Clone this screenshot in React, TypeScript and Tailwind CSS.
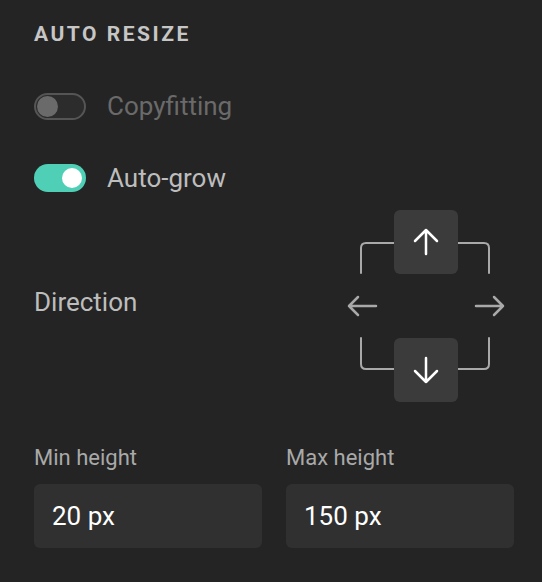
import { useState } from "react";

function Toggle({ on, disabled }: { on: boolean; disabled?: boolean }) {
  if (disabled) {
    return (
      <div className="flex h-[27px] w-[52px] items-center rounded-full border-2 border-[#555] bg-[#2c2c2c] px-[1px]">
        <div className="h-[21px] w-[21px] rounded-full bg-[#6a6a6a]" />
      </div>
    );
  }
  return (
    <div
      className={
        on
          ? "flex h-[28px] w-[52px] items-center justify-end rounded-full bg-[#4fd0b6] px-[4px]"
          : "flex h-[28px] w-[52px] items-center rounded-full bg-[#555] px-[4px]"
      }
    >
      <div className="h-[20px] w-[20px] rounded-full bg-white" />
    </div>
  );
}

function DirButton({ up }: { up: boolean }) {
  return (
    <div className="relative flex h-[64px] w-[64px] items-center justify-center rounded-[6px] bg-[#3b3b3b]">
      <svg width="28" height="28" viewBox="0 0 28 28" fill="none" stroke="#fff" strokeWidth="2.5" strokeLinecap="round" strokeLinejoin="round">
        {up ? <path d="M14 2V26M3 13L14 2L25 13" /> : <path d="M14 2V26M3 15L14 26L25 15" />}
      </svg>
    </div>
  );
}

function DirectionPad() {
  return (
    <div className="relative mr-2 flex h-[192px] w-[160px] flex-col items-center justify-between">
      <svg className="absolute inset-0" width="160" height="192" viewBox="0 0 160 192" fill="none" stroke="#a9a9a9" strokeWidth="2" strokeLinecap="round" strokeLinejoin="round">
        <path d="M15 63V38Q15 33 20 33H138Q143 33 143 38V63" />
        <path d="M15 128V154Q15 159 20 159H138Q143 159 143 154V128" />
        <path d="M30 96H3M12 87L3 96L12 105" strokeWidth="2.5" />
        <path d="M130 96H157M148 87L157 96L148 105" strokeWidth="2.5" />
      </svg>
      <DirButton up />
      <DirButton up={false} />
    </div>
  );
}

function Field({ label, value }: { label: string; value: string }) {
  return (
    <div className="flex flex-col">
      <div className="h-6 text-[22px] leading-6 text-[#a9a9a9]">{label}</div>
      <div className="mt-[14px] flex h-[64px] items-center rounded-[6px] bg-[#303030] px-[18px] text-[26px] text-white">
        {value}
      </div>
    </div>
  );
}

export default function App() {
  const [grow] = useState(true);
  return (
    <div
      className="h-[582px] w-[542px] bg-[#242424] pl-[34px] pr-[28px] pt-[22px]"
      style={{ fontFamily: "Roboto, 'Noto Sans', sans-serif" }}
    >
      <div className="h-6 text-[21px] font-bold leading-6 tracking-[0.12em] text-[#c6c6c6]">AUTO RESIZE</div>

      <div className="mt-[46px] flex h-[28px] items-center gap-[21px]">
        <Toggle on={false} disabled />
        <span className="text-[26px] text-[#6a6a6a]">Copyfitting</span>
      </div>

      <div className="mt-[44px] flex h-[28px] items-center gap-[21px]">
        <Toggle on={grow} />
        <span className="text-[26px] text-[#bdbdbd]">Auto-grow</span>
      </div>

      <div className="mt-[18px] flex items-center justify-between">
        <span className="pb-[7px] text-[26px] text-[#bdbdbd]">Direction</span>
        <DirectionPad />
      </div>

      <div className="mt-[44px] grid grid-cols-2 gap-6">
        <Field label="Min height" value="20 px" />
        <Field label="Max height" value="150 px" />
      </div>
    </div>
  );
}
